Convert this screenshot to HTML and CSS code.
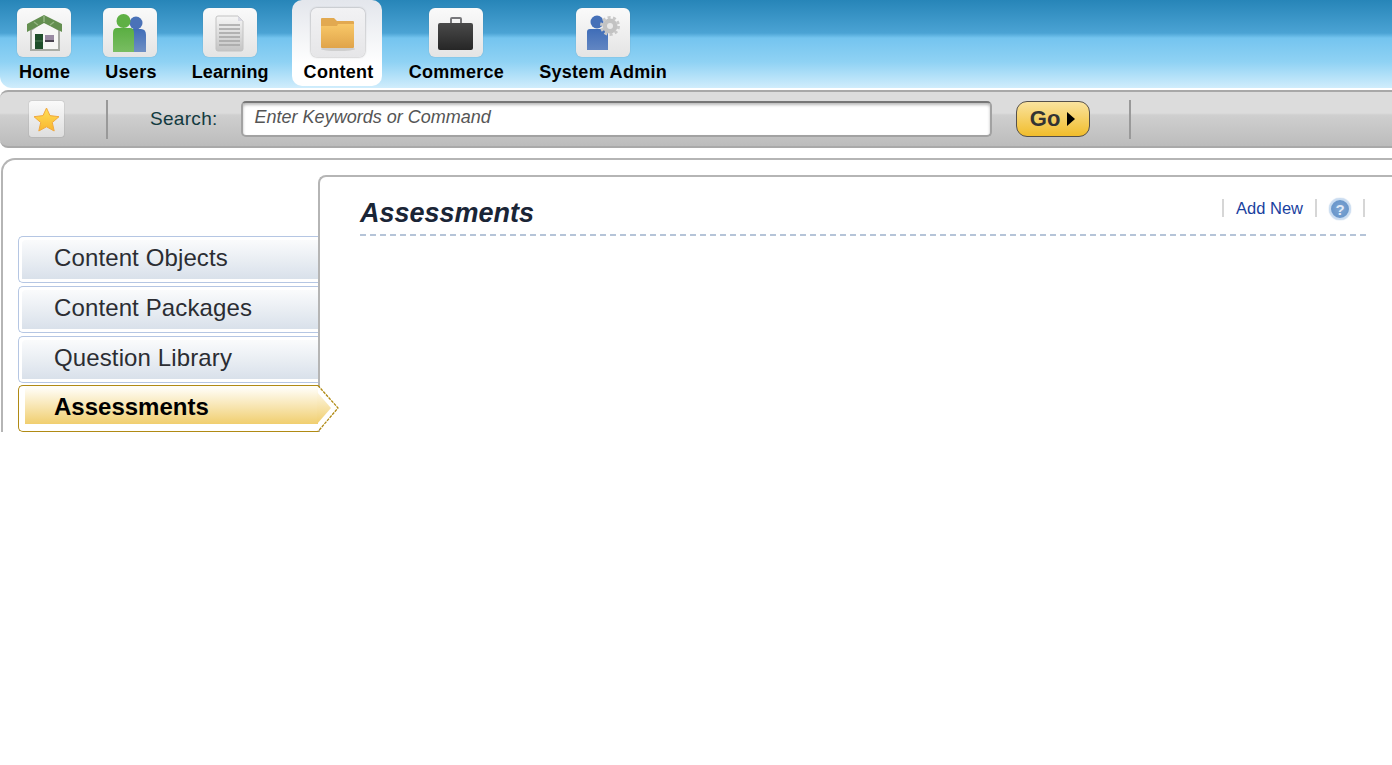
FILE: index.html
```html
<!DOCTYPE html>
<html lang="en">
<head>
  <meta charset="UTF-8" />
  <title>Assessments</title>
  <link rel="stylesheet" href="styles.css">
</head>
<body>

<div class="topnav">
  <a class="nav-item">
    <span class="tile">
      <svg width="54" height="49" viewBox="0 0 54 49">
        <path d="M14 22 L27 13 L42 22 V42 H14 Z" fill="#f7f7f5" stroke="#a9aca5" stroke-width="2"/>
        <path d="M10 16 L27 7 L45 16 V24 L27 15 L10 24 Z" fill="#648f50"/>
        <path d="M27 8 V14 M17 14 L21 17 M37 14 L33 17" stroke="#93b581" stroke-width="1.500"/>
        <rect x="18" y="26" width="8" height="15" fill="#1f4f2a"/>
        <path d="M18 33 H26" stroke="#4f7a55"/>
        <rect x="28" y="27" width="9" height="7" fill="#9a8aa2"/>
        <rect x="28" y="32" width="9" height="2" fill="#4a4450"/>
      </svg>
    </span>
    <span class="nav-label">Home</span>
  </a>
  <a class="nav-item">
    <span class="tile">
      <svg width="54" height="49" viewBox="0 0 54 49">
        <defs>
          <linearGradient id="bluePerson" x1="0" y1="0" x2="0" y2="1"><stop offset="0" stop-color="#3f6db8"/><stop offset="1" stop-color="#6f8fc4"/></linearGradient>
          <linearGradient id="greenPerson" x1="0" y1="0" x2="0" y2="1"><stop offset="0" stop-color="#5aae42"/><stop offset="1" stop-color="#79bd62"/></linearGradient>
        </defs>
        <circle cx="33" cy="15" r="6.500" fill="#4a72b8"/>
        <path d="M27 21 H38 Q43 21 43 27 V44 H27 Z" fill="url(#bluePerson)"/>
        <circle cx="20.500" cy="13" r="7" fill="#5fb045"/>
        <path d="M14 20 H27 Q31 20 31 25 V44 H10 V25 Q10 20 14 20 Z" fill="url(#greenPerson)"/>
      </svg>
    </span>
    <span class="nav-label">Users</span>
  </a>
  <a class="nav-item">
    <span class="tile">
      <svg width="54" height="49" viewBox="0 0 54 49">
        <defs>
          <linearGradient id="docFill" x1="0" y1="0" x2="0" y2="1"><stop offset="0" stop-color="#f6f6f6"/><stop offset="1" stop-color="#c4c4c4"/></linearGradient>
        </defs>
        <path d="M15 8 H35 L40 13 V41 Q40 43 38 43 H15 Q13 43 13 41 V10 Q13 8 15 8 Z" fill="url(#docFill)" stroke="#c2c2c2"/>
        <path d="M35 8 V13 H40 Z" fill="#d9d9e2"/>
        <path d="M16 17 H37 M16 21 H37 M16 25 H37 M16 29 H37 M16 33 H37 M16 37 H37" stroke="#a4a4a4" stroke-width="1.500"/>
      </svg>
    </span>
    <span class="nav-label tight">Learning</span>
  </a>
  <a class="nav-item active">
    <span class="tile">
      <svg width="54" height="49" viewBox="0 0 54 49">
        <defs>
          <linearGradient id="folderFill" x1="0" y1="0" x2="0" y2="1"><stop offset="0" stop-color="#f8c868"/><stop offset="1" stop-color="#e0a44a"/></linearGradient>
        </defs>
        <ellipse cx="27" cy="41" rx="17" ry="2" fill="#cfcfcf"/>
        <path d="M10 11 Q10 10 11 10 H23 L26 13 H42 Q43 13 43 14 V20 H10 Z" fill="#e2a950"/>
        <path d="M10 18 L26 18 L27 16 H43 V39 Q43 40 42 40 H11 Q10 40 10 39 Z" fill="url(#folderFill)"/>
      </svg>
    </span>
    <span class="nav-label">Content</span>
  </a>
  <a class="nav-item">
    <span class="tile">
      <svg width="54" height="49" viewBox="0 0 54 49">
        <defs>
          <linearGradient id="caseFill" x1="0" y1="0" x2="0" y2="1"><stop offset="0" stop-color="#4a4a4a"/><stop offset="1" stop-color="#262626"/></linearGradient>
        </defs>
        <path d="M22 16 V11 Q22 10 23 10 H31 Q32 10 32 11 V16" fill="none" stroke="#77777a" stroke-width="2"/>
        <rect x="9" y="15" width="35" height="27" rx="2" fill="url(#caseFill)"/>
      </svg>
    </span>
    <span class="nav-label">Commerce</span>
  </a>
  <a class="nav-item">
    <span class="tile">
      <svg width="54" height="49" viewBox="0 0 54 49">
        <defs>
          <linearGradient id="adminFill" x1="0" y1="0" x2="0" y2="1"><stop offset="0" stop-color="#3f6db8"/><stop offset="1" stop-color="#6286c2"/></linearGradient>
        </defs>
        <circle cx="21" cy="14" r="6.500" fill="#4670b8"/>
        <path d="M14 21 H32 V42 H11 V24 Q11 21 14 21 Z" fill="url(#adminFill)"/>
        <circle cx="34" cy="18" r="7.500" fill="#c2c2c2"/>
        <circle cx="34" cy="18" r="8.500" fill="none" stroke="#c8c8c8" stroke-width="3" stroke-dasharray="3 2.340"/>
        <circle cx="34" cy="18" r="3" fill="#e8e8e8"/>
      </svg>
    </span>
    <span class="nav-label">System Admin</span>
  </a>
</div>

<div class="toolbar">
  <span class="fav-btn">
    <svg width="27" height="25" viewBox="0 0 27 25">
      <defs>
        <linearGradient id="starFill" x1="0" y1="0" x2="0" y2="1"><stop offset="0" stop-color="#ffdf55"/><stop offset="1" stop-color="#f9b630"/></linearGradient>
      </defs>
      <path d="M13.500 1 L17 8.600 L26 9.700 L19.300 15.500 L21.200 24 L13.500 19.800 L5.800 24 L7.700 15.500 L1 9.700 L10 8.600 Z" fill="url(#starFill)" stroke="#f0a83f"/>
    </svg>
  </span>
  <span class="tool-sep"></span>
  <label class="search-label">Search:</label>
  <div class="search-box">Enter Keywords or Command</div>
  <span class="go-btn">Go<i class="go-arrow"></i></span>
  <span class="tool-sep"></span>
</div>

<div class="main">
  <ul class="side-menu">
    <li>Content Objects</li>
    <li>Content Packages</li>
    <li>Question Library</li>
    <li class="current">
      Assessments
      <svg class="menu-arrow" width="22" height="47" viewBox="0 0 22 47">
        <defs>
          <linearGradient id="arrowFill" gradientUnits="userSpaceOnUse" x1="0" y1="2" x2="0" y2="39"><stop offset="0" stop-color="#fffdf6"/><stop offset="1" stop-color="#f0cd6b"/></linearGradient>
        </defs>
        <path d="M1 .5 L21 23 L1 46.500" fill="#fff" stroke="#b08a14" stroke-width="1.300" stroke-dasharray="3 1"/>
        <path d="M0 7 L14 23 L0 39 Z" fill="url(#arrowFill)"/>
      </svg>
    </li>
  </ul>

  <div class="content">
    <div class="content-head">
      <h1>Assessments</h1>
      <div class="actions">
        <span class="pipe"></span>
        <a class="add-link">Add New</a>
        <span class="pipe"></span>
        <span class="help">?</span>
        <span class="pipe"></span>
      </div>
    </div>
  </div>
</div>

</body>
</html>
```

FILE: styles.css
```css
body {
  margin: 0;
  background: #fff;
  font-family: 'Liberation Sans', Arial, sans-serif;
}
.topnav {
  display: flex;
  gap: 13px;
  height: 88px;
  padding-left: 7px;
  box-sizing: border-box;
  border-bottom-left-radius: 12px;
  background: linear-gradient(to bottom, #2785b8 0, #4ba3d4 33px, #74c4ef 38px, #8fd2f4 62px, #d0edfc 88px);
}
.nav-item {
  display: flex;
  flex-direction: column;
  align-items: center;
  height: 86px;
  padding: 8px 10px 0 12px;
  box-sizing: border-box;
  border-radius: 0 0 10px 10px;
}
.nav-item.active {
  margin-right: 2px;
  padding-right: 8px;
  background: linear-gradient(to bottom, #e3e6ec, #fff 75%);
  border-radius: 10px;
}
.tile {
  display: block;
  width: 54px;
  height: 49px;
  margin: 0 -7.500px 0 -8.500px;
  border-radius: 6px;
  background: linear-gradient(to bottom, #fafafa, #e4e4e4);
  box-shadow: 0 0 1px rgba(90, 90, 90, 0.5);
}
.tile svg {
  display: block;
  filter: blur(0.4px);
}
.active .tile {
  background: linear-gradient(to bottom, #f2f2f4, #e6e6e8);
  box-shadow: 0 0 2px rgba(90, 90, 90, 0.7);
}
.nav-label {
  margin-top: 5px;
  font-size: 18px;
  font-weight: 700;
  letter-spacing: 0.3px;
  line-height: 20px;
  color: #000;
  white-space: nowrap;
}
.nav-label.tight {
  letter-spacing: 0.1px;
}
.toolbar {
  display: flex;
  align-items: center;
  height: 58px;
  margin-top: 2px;
  box-sizing: border-box;
  border-top: 2px solid #a8a8a8;
  border-bottom: 2px solid #a9a9a9;
  border-bottom-left-radius: 8px;
  border-top-left-radius: 8px;
  background: linear-gradient(to bottom, #dcdcdc 0, #dcdcdc 21px, #cfcfcf 23px, #bcbcbc 100%);
}
.fav-btn {
  display: flex;
  align-items: center;
  justify-content: center;
  width: 35px;
  height: 36px;
  margin-left: 29px;
  border-radius: 3px;
  background: linear-gradient(to bottom, #fafafa, #dedede);
  box-shadow: 0 0 1px rgba(70, 70, 70, 0.7);
}
.fav-btn svg {
  filter: blur(0.3px);
}
.tool-sep {
  width: 2px;
  height: 39px;
  margin-left: 42px;
  background: #999;
}
.search-label {
  margin-left: 42px;
  font-size: 19px;
  letter-spacing: 0.3px;
  color: #123a40;
}
.search-box {
  width: 735px;
  height: 32px;
  margin-left: 23px;
  padding-left: 12px;
  border: 2px solid #a2a2a2;
  border-top-color: #777;
  border-radius: 5px;
  background: #fff;
  box-shadow: inset 0 2px 3px #bbb;
  font-size: 18px;
  font-style: italic;
  line-height: 28px;
  color: #555;
}
.go-btn {
  display: flex;
  align-items: center;
  justify-content: center;
  gap: 7px;
  width: 72px;
  height: 34px;
  margin-left: 24px;
  border: 1px solid #56514a;
  border-radius: 11px;
  background: linear-gradient(to bottom, #fae39e, #f1bd2c);
  font-size: 22px;
  font-weight: 700;
  color: #333;
}
.go-arrow {
  width: 0;
  height: 0;
  border-left: 8px solid #000;
  border-top: 7px solid transparent;
  border-bottom: 7px solid transparent;
}
.toolbar .go-btn + .tool-sep {
  margin-left: 39px;
}
.main {
  display: flex;
  height: 274px;
  margin: 10px 0 0 1px;
  box-sizing: border-box;
  border-top: 2px solid #b5b5b5;
  border-left: 2px solid #b5b5b5;
  border-top-left-radius: 14px;
}
.side-menu {
  flex: none;
  width: 300px;
  margin: 0;
  padding: 76px 0 0 15px;
  list-style: none;
}
.side-menu li {
  position: relative;
  height: 47px;
  margin-bottom: 3px;
  box-sizing: border-box;
  padding-left: 35px;
  border: 1px solid #b5c6e3;
  border-right: 0;
  border-radius: 5px 0 0 5px;
  box-shadow: inset 3px 3px 0 #fff, inset 0 -3px 0 #fff;
  background: linear-gradient(to bottom, #fafbfc 3px, #d8e0ea 43px);
  font-size: 24px;
  letter-spacing: 0.12px;
  line-height: 42px;
  color: #2b2d33;
}
.side-menu li.current {
  z-index: 1;
  margin-top: -1px;
  border-color: #b08a14;
  box-shadow: inset 6px 0 0 #fff, inset 0 -7px 0 #fff;
  background: linear-gradient(to bottom, #fffdf6 2px, #f0cd6b 39px);
  font-weight: 700;
  letter-spacing: 0;
  color: #000;
}
.menu-arrow {
  position: absolute;
  top: -1px;
  right: -21px;
}
.content {
  flex: 1;
  margin-top: 15px;
  box-sizing: border-box;
  border-top: 2px solid #b5b5b5;
  border-left: 2px solid #b5b5b5;
  border-top-left-radius: 8px;
  padding: 0 26px 0 40px;
}
.content-head {
  display: flex;
  justify-content: space-between;
  height: 59px;
  box-sizing: border-box;
  border-bottom: 2px dashed #b5c4d8;
}
h1 {
  margin: 18px 0 0;
  font-size: 27px;
  font-style: italic;
  line-height: 36px;
  color: #1a2536;
}
.actions {
  display: flex;
  align-items: center;
  gap: 12px;
  height: 22px;
  margin: 20px 1px 0 0;
}
.pipe {
  width: 2px;
  height: 18px;
  background: #d6d6d6;
}
.add-link {
  font-size: 16.500px;
  color: #1a3fa0;
}
.help {
  display: flex;
  align-items: center;
  justify-content: center;
  width: 18px;
  height: 18px;
  margin-top: 2px;
  border: 2px solid #c9dcf1;
  border-radius: 50%;
  background: radial-gradient(circle, #7fa6d4, #5f8fc6);
  box-shadow: inset 0 0 1px #7fa5d0, 0 0 1px #7fa5d0;
  font-size: 15px;
  font-weight: 700;
  color: #dfe9f6;
}
```
